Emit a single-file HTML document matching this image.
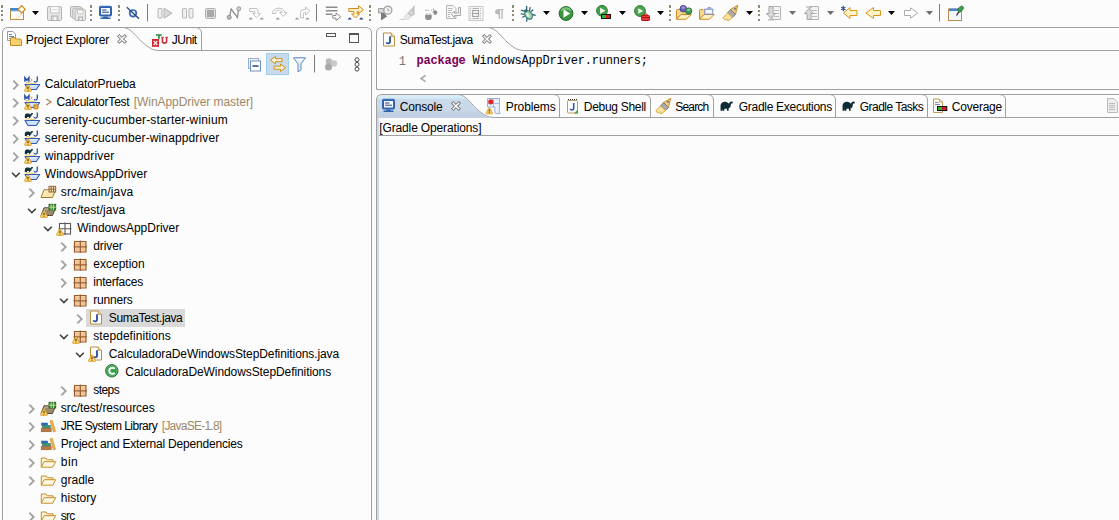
<!DOCTYPE html>
<html><head><meta charset="utf-8"><title>Eclipse</title>
<style>
html,body{margin:0;padding:0}
body{width:1119px;height:520px;overflow:hidden;background:#fcfcfc;position:relative;font:12px/16px "Liberation Sans", sans-serif;color:#000}
.t{position:absolute;white-space:pre;line-height:16px;font-size:12px}
.t b{font-weight:bold}
.m{font-family:"Liberation Mono", monospace}
.i{position:absolute;overflow:visible}
.h{position:absolute;top:5px;width:2px;height:16px;background:linear-gradient(to bottom,#8f8a72 0,#8f8a72 3px,transparent 3px,transparent 5px,#8f8a72 5px,#8f8a72 7px,transparent 7px,transparent 9px,#8f8a72 9px,#8f8a72 11px,transparent 11px,transparent 14px,#8f8a72 14px,#8f8a72 16px)}
.sel{position:absolute;left:86px;top:309px;width:99px;height:18px;background:#d9d9d9}
.act{position:absolute;left:266px;top:53px;width:23px;height:22px;box-sizing:border-box;background:#c9dbeb;border:1px solid #9ccff5}
.cstrip{position:absolute;left:377px;top:118px;width:2px;height:402px;background:#cddbeb}
</style></head><body>
<div class="sel"></div><div class="act"></div><div class="cstrip"></div>
<div class="h" style="left:1px"></div><div class="h" style="left:90px"></div><div class="h" style="left:118px"></div><div class="h" style="left:369px"></div><div class="h" style="left:512px"></div><div class="h" style="left:669px"></div><div class="h" style="left:758px"></div>

<svg class="i" style="left:0;top:0" width="1119" height="520" viewBox="0 0 1119 520" fill="none" stroke="#a0a0a0" stroke-width="1">
 <defs><linearGradient id="cg" x1="0" y1="0" x2="0" y2="1"><stop offset="0" stop-color="#dbeffa"/><stop offset="0.13" stop-color="#d5e9f6"/><stop offset="0.217" stop-color="#c9d9e9"/><stop offset="0.652" stop-color="#c9d9e9"/><stop offset="0.783" stop-color="#c1d1e3"/><stop offset="1" stop-color="#c1d1e3"/></linearGradient></defs>
 <path d="M377 118 V100 Q377 95 382 95 H458.2 C463.2 95.500 467.2 99 471.600 104 C476.200 109 478.200 110.700 480.500 112.500 C484.200 115.500 488.200 118 493.200 118Z" fill="url(#cg)" stroke="none"/>
 <path d="M2.500 520 V33 Q2.500 27.500 8 27.500 H366 Q371.500 27.500 371.500 33 V520"/>
 <path d="M123.4 27.5 C128.4 28 132.4 31.5 136.8 36.5 C141.4 41.5 143.4 43.2 145.7 45 C149.4 48 153.4 50.5 158.4 50.5 H371.500"/>
 <path d="M201.5 50.5 V33.0 Q201.5 28.3 196.0 27.5"/>
 <path d="M1119 89.500 H376.500 V33 Q376.500 27.500 382 27.500 H1119"/>
 <path d="M488.3 27.5 C493.3 28 497.3 31.5 501.7 36.5 C506.3 41.5 508.3 43.2 510.6 45 C514.3 48 518.3 50.5 523.3 50.5 H1119"/>
 <path d="M376.500 520 V100 Q376.500 94.500 382 94.500 H1119"/>
 <path d="M458.2 94.5 C463.2 95 467.2 98.5 471.6 103.5 C476.2 108.5 478.2 110.2 480.5 112 C484.2 115 488.2 117.5 493.2 117.5 H1119"/>
 <path d="M379 135.500 H1119"/>
 <path d="M46.300 99 L51 102 L46.300 105" stroke="#a87848" stroke-width="1.100"/>
 <path d="M425.500 75.300 L421 78.500 L425.500 81.700" stroke="#a8a8a8" stroke-width="1.600"/>
 <path d="M559.5 117.5 V100.0 Q559.5 95.3 554.0 94.5"/><path d="M650.5 117.5 V100.0 Q650.5 95.3 645.0 94.5"/><path d="M713.5 117.5 V100.0 Q713.5 95.3 708.0 94.5"/><path d="M835.5 117.5 V100.0 Q835.5 95.3 830.0 94.5"/><path d="M927.5 117.5 V100.0 Q927.5 95.3 922.0 94.5"/><path d="M1005.5 117.5 V100.0 Q1005.5 95.3 1000.0 94.5"/>
 <path d="M147.500 4 V21.500 M316.500 4 V21.500 M939.500 4 V21.500 M314.500 55 V72.500" stroke="#7a7a7a"/>
</svg>
<svg class="i" style="left:10px;top:5px" width="16" height="16" viewBox="0 0 16 16"><rect x="0.500" y="3.500" width="13" height="11" fill="#fff" stroke="#bd8a48"/><rect x="0.500" y="3" width="13.500" height="2.800" fill="#3f86d2"/><path d="M1 6.300 H13" stroke="#a8cdf0" stroke-width="0.800"/><path d="M3 14 C8 13.500 11 10.500 12 7" stroke="#f6e3a4" stroke-width="1.200" fill="none"/><path d="M11.700 0.800 L15.200 4.400 L11.700 8 L8.200 4.400Z" fill="#fbe6b4" stroke="#cf8a20" stroke-width="1.300" stroke-linejoin="round"/><path d="M11.700 2.300 V6.500 M9.600 4.400 H13.800" stroke="#fff" stroke-width="1.600"/></svg><svg class="i" style="left:47px;top:5px" width="16" height="16" viewBox="0 0 16 16"><path d="M2 1.500 H13 Q14.500 1.500 14.500 3 V14 Q14.500 15.500 13 15.500 H2 Q0.500 15.500 0.500 14 V3 Q0.500 1.500 2 1.500Z" fill="#e6e6e6" stroke="#b4b4b4"/><rect x="3.500" y="1.500" width="8.500" height="6.500" fill="#f8f8f8" stroke="#c6c6c6"/><path d="M5 4.500 H10.500" stroke="#dcdcdc"/><rect x="4.500" y="11" width="6.500" height="4.500" fill="#d6d6d6" stroke="#b4b4b4"/><rect x="7" y="12" width="2" height="3" fill="#f6f6f6"/></svg><svg class="i" style="left:70px;top:5px" width="16" height="16" viewBox="0 0 16 16"><path d="M1.7 1.5 H9.8 Q11.0 1.5 11.0 2.7 V11.0 Q11.0 12.2 9.8 12.2 H1.7 Q0.5 12.2 0.5 11.0 V2.7 Q0.5 1.5 1.7 1.5Z" fill="#e8e8e8" stroke="#b4b4b4"/><path d="M3.9000000000000004 3.2 H12.0 Q13.2 3.2 13.2 4.4 V12.7 Q13.2 13.899999999999999 12.0 13.899999999999999 H3.9000000000000004 Q2.7 13.899999999999999 2.7 12.7 V4.4 Q2.7 3.2 3.9000000000000004 3.2Z" fill="#e8e8e8" stroke="#b4b4b4"/><path d="M6.2 4.8 H14.3 Q15.5 4.8 15.5 6.0 V14.3 Q15.5 15.5 14.3 15.5 H6.2 Q5 15.5 5 14.3 V6.0 Q5 4.8 6.2 4.8Z" fill="#e8e8e8" stroke="#b4b4b4"/><rect x="7.500" y="5" width="5.500" height="3.800" fill="#f8f8f8" stroke="#c8c8c8"/><rect x="8.500" y="12" width="4" height="3.500" fill="#d6d6d6" stroke="#b4b4b4"/><rect x="10" y="13" width="1.500" height="2" fill="#f6f6f6"/></svg><svg class="i" style="left:98px;top:4px" width="16" height="16" viewBox="0 0 16 16"><rect x="2" y="3" width="11" height="8.500" rx="0.800" fill="#f6fafe" stroke="#2f62ac" stroke-width="2"/><path d="M1.500 3 Q1.500 2.200 2.500 2.200 H12.500 Q13.500 2.200 13.500 3" fill="none" stroke="#4178c4" stroke-width="0.800"/><path d="M4 6 H8.500 M4 8.200 H11" stroke="#2b3f8a" stroke-width="1"/><path d="M5.500 12.500 H9.500 L10 13.500 H12.500 V15 H2.500 V13.500 H5Z" fill="#2f62ac"/></svg><svg class="i" style="left:126px;top:5px" width="16" height="16" viewBox="0 0 16 16"><circle cx="7" cy="8.300" r="3.300" fill="#f2f7fd" stroke="#2f66b4" stroke-width="1.700"/><path d="M0.800 2.300 L13 13.800" stroke="#27478a" stroke-width="1.300"/></svg><svg class="i" style="left:157px;top:5px" width="16" height="16" viewBox="0 0 16 16"><rect x="1" y="3.500" width="4" height="9.500" rx="0.800" fill="#f0f0f0" stroke="#b4b4b4"/><path d="M7 3.200 L15 8.200 L7 13.200Z" fill="#d8d8d8" stroke="#b4b4b4" stroke-linejoin="round"/></svg><svg class="i" style="left:180px;top:5px" width="16" height="16" viewBox="0 0 16 16"><rect x="2.500" y="3.500" width="4" height="9.500" rx="0.800" fill="#f0f0f0" stroke="#b4b4b4"/><rect x="9" y="3.500" width="4" height="9.500" rx="0.800" fill="#f0f0f0" stroke="#b4b4b4"/></svg><svg class="i" style="left:203px;top:5px" width="16" height="16" viewBox="0 0 16 16"><rect x="2.500" y="3.500" width="10" height="10" rx="1.200" fill="#e0e0e0" stroke="#b0b0b0"/><rect x="4" y="5" width="7" height="7" fill="#a8a8a8"/></svg><svg class="i" style="left:226px;top:5px" width="16" height="16" viewBox="0 0 16 16"><path d="M3.500 12 L5.200 4 L11.500 12.500 L12.500 4" stroke="#8f8f8f" stroke-width="1.300" fill="none"/><circle cx="3.200" cy="12.300" r="2" fill="#bdbdbd" stroke="#909090"/><circle cx="12.800" cy="3.800" r="2" fill="#cfcfcf" stroke="#9a9a9a"/></svg><svg class="i" style="left:249px;top:5px" width="16" height="16" viewBox="0 0 16 16"><path d="M0.500 3.500 H7 Q9 3.500 9 5.500 V8.500 H11.500 L7.500 12.500 L3.500 8.500 H6 V6.500 H0.500Z" fill="#fafafa" stroke="#c2c2c2"/><path d="M-0.3 14.500 Q1.7 10.700 3.7 14.500Z" fill="#9c9c9c"/><path d="M10.8 14.500 Q12.8 10.700 14.8 14.500Z" fill="#9c9c9c"/></svg><svg class="i" style="left:272px;top:5px" width="16" height="16" viewBox="0 0 16 16"><path d="M0.500 8.500 C0.500 1.500 12.500 1.500 12.500 7.500 H15 L11.300 11.500 L7.500 7.500 H10 C10 4.500 3.500 4 3.500 8.500Z" fill="#fafafa" stroke="#c2c2c2"/><path d="M3.8 14.500 Q5.8 10.700 7.8 14.500Z" fill="#9c9c9c"/></svg><svg class="i" style="left:295px;top:5px" width="16" height="16" viewBox="0 0 16 16"><path d="M5.500 13 V7.500 Q5.500 4.500 8.500 4.500 H10.500 V2 L14.800 6 L10.500 10 V7.500 H9.500 Q8.500 7.500 8.500 8.500 V13Z" fill="#fafafa" stroke="#c2c2c2"/><path d="M0 14.500 Q2 10.700 4 14.500Z" fill="#9c9c9c"/><path d="M10.5 14.500 Q12.5 10.700 14.5 14.500Z" fill="#9c9c9c"/></svg><svg class="i" style="left:325px;top:5px" width="16" height="16" viewBox="0 0 16 16"><path d="M0.800 2.200 H12.500 M0.800 5.700 H12.500 M0.800 9.200 H7.500" stroke="#8c8c8c" stroke-width="1.400"/><path d="M7.800 10.500 H11 V8 L15.700 11.800 L11 15.500 V13.200 H7.800Z" fill="#fff" stroke="#8a8a8a"/></svg><svg class="i" style="left:348px;top:5px" width="16" height="16" viewBox="0 0 16 16"><path d="M0.800 3.500 H10.500 V0.800 L15.500 4.800 L10.500 8.800 V6.500 H9.300 V9 H11.500 L7.500 13 L3.500 9 H5.800 V6.500 H0.800Z" fill="#fdf0c8" stroke="#d68a18" stroke-linejoin="round"/><path d="M-0.3 14.500 Q1.7 10.700 3.7 14.500Z" fill="#2c4a8c"/><path d="M11.3 14.500 Q13.3 10.700 15.3 14.500Z" fill="#2c4a8c"/></svg><svg class="i" style="left:377px;top:5px" width="16" height="16" viewBox="0 0 16 16"><path d="M1.500 3.500 H8 V8 H1.500Z" fill="#d4d4d4" stroke="#9e9e9e"/><path d="M4 8 H7.500 L10 11.500 L4 15.500Z" fill="#7a7a7a"/><circle cx="10.800" cy="5.200" r="4" fill="#f2f2f2" stroke="#ababab" stroke-width="1.500"/><path d="M10.800 3.200 V5.600 H12.800" stroke="#ababab" fill="none"/></svg><svg class="i" style="left:400px;top:5px" width="16" height="16" viewBox="0 0 16 16"><path d="M14.700 0 L14.700 9.500 L11 11.800 L7.300 8Z" fill="#c6c6c6"/><path d="M7.300 8 L11 11.800 L8.500 14.500 H3 L4.200 11.800Z" fill="#e8e8e8" stroke="#d6d6d6" stroke-width="0.700"/><path d="M10 6.500 L12.500 9" stroke="#e4e4e4" stroke-width="1.200"/><path d="M-0.500 14.500 H3.500" stroke="#cdcdcd"/></svg><svg class="i" style="left:423px;top:5px" width="16" height="16" viewBox="0 0 16 16"><circle cx="5.400" cy="11.700" r="3.400" fill="#8e8e8e"/><ellipse cx="5.400" cy="8.900" rx="2.500" ry="1" fill="#e2e2e2"/><path d="M2 5.300 H4 M4.800 5.300 H6" stroke="#a0a0a0" stroke-width="0.900"/><circle cx="12" cy="7.600" r="2.300" fill="#8c8c8c"/><path d="M9.300 8.300 L11.200 7.500 L10.300 9.800Z" fill="#fcfcfc"/><circle cx="8.600" cy="5" r="0.600" fill="#9a9a9a"/><circle cx="10.500" cy="4.200" r="0.600" fill="#9a9a9a"/></svg><svg class="i" style="left:446px;top:5px" width="16" height="16" viewBox="0 0 16 16"><path d="M0.500 0.500 H7 L10 3.500 V13.500 H0.500Z" fill="#f6f6f6" stroke="#b4b4b4"/><path d="M2 3.500 H6.500 M2 5.500 H6 M2 7.500 H5 M2 9.500 H4 M2 11.500 H4" stroke="#b8b8b8"/><path d="M12.500 2.500 H14.500 V10.500 H8.500 V12.500 L5.300 9.300 L8.500 6 V8 H12.500Z" fill="#f2f2f2" stroke="#a8a8a8"/></svg><svg class="i" style="left:469px;top:5px" width="16" height="16" viewBox="0 0 16 16"><rect x="0" y="1.500" width="14" height="14" fill="#f6f6f6" stroke="#c8c8c8"/><path d="M3.500 3.500 H10 M3.500 13.500 H10" stroke="#b4b4b4"/><rect x="3.500" y="5.500" width="6" height="6" fill="#f0f0f0" stroke="#a4a4a4"/><path d="M3.500 8.500 H9.500" stroke="#a4a4a4"/><path d="M1.500 3 V14 M11.500 3 V14" stroke="#b8b8b8" stroke-dasharray="1 1.500"/></svg><svg class="i" style="left:492px;top:5px" width="16" height="16" viewBox="0 0 16 16"><path d="M6.800 4 H11.500 V5.300 H10.700 V14 H9.300 V5.300 H8 V14 H6.600 V9.500 C1.800 9.500 1.800 4 6.800 4Z" fill="#b9b9b9"/></svg><svg class="i" style="left:520px;top:5px" width="16" height="16" viewBox="0 0 16 16"><g transform="translate(0.300,1) rotate(-35 8 8.500)"><path d="M4.500 0.500 L6.800 4 M11.500 0.500 L9.200 4 M1.500 7.500 H4.500 M11.500 7.500 H14.800 M2.500 13.500 L5 10.500 M13.500 13.500 L11 10.500 M2.200 3.500 L5 6.300 M13.800 3.500 L11 6.300" stroke="#1d5a6b" stroke-width="1.200"/><ellipse cx="8" cy="9" rx="3.300" ry="4.700" fill="#9ed0a4" stroke="#2a6a7a"/><ellipse cx="7.300" cy="8.500" rx="1.300" ry="2.600" fill="#e2f4dc"/><circle cx="8" cy="4" r="1.600" fill="#2b6a78"/></g></svg><svg class="i" style="left:558px;top:5px" width="16" height="16" viewBox="0 0 16 16"><circle cx="8" cy="8.500" r="6.900" fill="#3b9640" stroke="#1f6b27"/><path d="M2.300 6.500 A6 6 0 0 1 13.700 6.500 A9 9 0 0 0 2.300 6.500Z" fill="#8fd08f" opacity="0.800"/><path d="M5.500 4.300 L12.200 8.500 L5.500 12.700Z" fill="#fff"/></svg><svg class="i" style="left:596px;top:5px" width="16" height="16" viewBox="0 0 16 16"><circle cx="6" cy="5.800" r="5.400" fill="#44a048" stroke="#2a7a31"/><path d="M4.200 2.800 L9.200 5.800 L4.200 8.800Z" fill="#fff"/><rect x="5" y="9" width="10" height="5" fill="#111"/><rect x="6" y="10" width="4" height="3" fill="#2db52d"/><rect x="10" y="10" width="4" height="3" fill="#e01b1b"/></svg><svg class="i" style="left:634px;top:5px" width="16" height="16" viewBox="0 0 16 16"><circle cx="6" cy="6" r="5.400" fill="#4aa54c" stroke="#2a7a31"/><path d="M4.300 3.200 L9 6 L4.300 8.800Z" fill="#fff"/><rect x="7.500" y="10.500" width="8" height="5" rx="0.800" fill="#e23b3b" stroke="#b01818"/><path d="M10 10.500 V9 H13 V10.500 M7.500 12.500 H15.500" stroke="#b01818" fill="none"/></svg><svg class="i" style="left:676px;top:5px" width="16" height="16" viewBox="0 0 16 16"><path d="M0.500 14 V5.500 Q0.500 4.500 1.500 4.500 H4 L5 5.500 H10 V9.500 H5Z" fill="#f6d88a" stroke="#cf8a28" stroke-linejoin="round"/><path d="M0.500 14.300 L5 9.500 H15.300 L10 14.300Z" fill="#fdf0c0" stroke="#cf8a28" stroke-linejoin="round"/><circle cx="7.300" cy="3.800" r="3.300" fill="#6a64b6" stroke="#4a4596"/><ellipse cx="7.300" cy="2.600" rx="2" ry="1.200" fill="#a9a4dc" opacity="0.800"/><circle cx="12.700" cy="6" r="3.100" fill="#3e9d56" stroke="#28753b"/><ellipse cx="12.700" cy="4.800" rx="1.900" ry="1.100" fill="#9fd8ac" opacity="0.800"/></svg><svg class="i" style="left:699px;top:5px" width="16" height="16" viewBox="0 0 16 16"><path d="M0.500 14 V5.500 Q0.500 4.500 1.500 4.500 H4 L5 5.500 H10 V9.500 H5Z" fill="#f6d88a" stroke="#cf8a28" stroke-linejoin="round"/><path d="M0.500 14.300 L5 9.500 H15.300 L10 14.300Z" fill="#fdf0c0" stroke="#cf8a28" stroke-linejoin="round"/><rect x="5.800" y="4.200" width="8" height="5" fill="#f2f5fd" stroke="#7d8cc4"/><path d="M8.800 4 V2.700 H11.800 V4" fill="#b4bde0" stroke="#7d8cc4" stroke-width="0.900"/></svg><svg class="i" style="left:722px;top:5px" width="16" height="16" viewBox="0 0 16 16"><path d="M8.500 4.500 L15.700 0.300 L13.500 9.500Z" fill="#f2c878" stroke="#c8902a" stroke-linejoin="round"/><circle cx="13" cy="3.800" r="0.900" fill="#3a5ab0"/><path d="M5.500 8 L8.500 4.500 L13.500 9.500 L10.500 12.500Z" fill="#ababab" stroke="#7c7c7c" stroke-linejoin="round"/><path d="M5.500 8 L10.500 12.500 L6 16 L4.700 13.800 L3 15.300 L0.800 12.800Z" fill="#fbe3a0" stroke="#d8a840" stroke-linejoin="round"/></svg><svg class="i" style="left:766px;top:5px" width="16" height="16" viewBox="0 0 16 16"><path d="M6 1.500 H14.500 V14.500 H6Z" fill="#f3f3f3" stroke="#b4b4b4"/><path d="M8 5.500 H13 M8 8.500 H13 M8 11.500 H13" stroke="#bcbcbc"/><path d="M3 1.500 H7 V8.500 H9.500 L5 13.500 L0.500 8.500 H3Z" fill="#d9d9d9" stroke="#a4a4a4"/><path d="M2 14.800 H8" stroke="#a4a4a4"/></svg><svg class="i" style="left:804px;top:5px" width="16" height="16" viewBox="0 0 16 16"><path d="M6 1.500 H14.500 V14.500 H6Z" fill="#f3f3f3" stroke="#b4b4b4"/><path d="M8 5.500 H13 M8 8.500 H13 M8 11.500 H13" stroke="#bcbcbc"/><path d="M3 14.500 H7 V8.500 H9.500 L5 3.500 L0.500 8.500 H3Z" fill="#d9d9d9" stroke="#a4a4a4"/><path d="M2 2 H8" stroke="#a4a4a4"/></svg><svg class="i" style="left:841px;top:5px" width="16" height="16" viewBox="0 0 16 16"><path d="M16 5.500 H9 V2.500 L2.500 8 L9 13.500 V10.500 H16Z" fill="#fff4c8" stroke="#d7951f" stroke-linejoin="round"/><path d="M2.300 0.800 V6.200 M0.200 2.200 L4.400 4.800 M4.400 2.200 L0.200 4.800" stroke="#2a4a9a" stroke-width="1.100"/></svg><svg class="i" style="left:865px;top:5px" width="16" height="16" viewBox="0 0 16 16"><path d="M15.500 5.500 H8.500 V2.500 L0.800 8 L8.500 13.500 V10.500 H15.500Z" fill="#fff4c8" stroke="#d7951f"/></svg><svg class="i" style="left:903px;top:5px" width="16" height="16" viewBox="0 0 16 16"><path d="M1.500 5.500 H7.500 V2.800 L14.700 8 L7.500 13.200 V10.500 H1.500Z" fill="#fff" stroke="#ababab"/></svg><svg class="i" style="left:948px;top:5px" width="16" height="16" viewBox="0 0 16 16"><rect x="0.500" y="4" width="13" height="11.500" fill="#e3effa" stroke="#b88c50"/><path d="M1 9 L7 4.500 H13 V15 H1Z" fill="#f4f9fe" opacity="0.800"/><rect x="1" y="3.500" width="12" height="2.500" fill="#4b86d0"/><path d="M8.500 10.500 L11 6.500" stroke="#222" stroke-width="1.200"/><path d="M9.800 5.300 Q10.500 2 12.800 1.500 Q14 0.200 15 1.700 Q16 3 14.800 4.500 Q13 7.200 11.300 7.300Z" fill="#3aa04a" stroke="#1f6b2c" stroke-width="0.800"/></svg><svg class="i" style="left:32px;top:11px" width="7" height="4" viewBox="0 0 7 4"><path d="M0 0 H7 L3.5 4Z" fill="#000"/></svg><svg class="i" style="left:543px;top:11px" width="7" height="4" viewBox="0 0 7 4"><path d="M0 0 H7 L3.5 4Z" fill="#000"/></svg><svg class="i" style="left:581px;top:11px" width="7" height="4" viewBox="0 0 7 4"><path d="M0 0 H7 L3.5 4Z" fill="#000"/></svg><svg class="i" style="left:619px;top:11px" width="7" height="4" viewBox="0 0 7 4"><path d="M0 0 H7 L3.5 4Z" fill="#000"/></svg><svg class="i" style="left:657px;top:11px" width="7" height="4" viewBox="0 0 7 4"><path d="M0 0 H7 L3.5 4Z" fill="#000"/></svg><svg class="i" style="left:746px;top:11px" width="7" height="4" viewBox="0 0 7 4"><path d="M0 0 H7 L3.5 4Z" fill="#000"/></svg><svg class="i" style="left:888px;top:11px" width="7" height="4" viewBox="0 0 7 4"><path d="M0 0 H7 L3.5 4Z" fill="#000"/></svg><svg class="i" style="left:789px;top:11px" width="7" height="4" viewBox="0 0 7 4"><path d="M0 0 H7 L3.5 4Z" fill="#6e6e6e"/></svg><svg class="i" style="left:827px;top:11px" width="7" height="4" viewBox="0 0 7 4"><path d="M0 0 H7 L3.5 4Z" fill="#6e6e6e"/></svg><svg class="i" style="left:926px;top:11px" width="7" height="4" viewBox="0 0 7 4"><path d="M0 0 H7 L3.5 4Z" fill="#6e6e6e"/></svg><svg class="i" style="left:6px;top:31px" width="16" height="16" viewBox="0 0 16 16"><path d="M1.500 0.500 H7 L9.500 3 V9.500 H1.500Z" fill="#fff" stroke="#8f9bb5"/><path d="M3 3.500 H6 M3 5.500 H8 M3 7.500 H6" stroke="#5b8bd0"/><path d="M4.500 14.500 V8 Q4.500 6.500 6 6.500 H8.500 L9.500 8 H14 Q15.500 8 15.500 9.500 V14.500Z" fill="#f6cf6e" stroke="#c18d2a"/></svg><svg class="i" style="left:117px;top:34px" width="10" height="10" viewBox="0 0 10 10"><path d="M0.600 2.200 L2.200 0.600 L5 3.400 L7.800 0.600 L9.400 2.200 L6.600 5 L9.400 7.800 L7.800 9.400 L5 6.600 L2.200 9.400 L0.600 7.800 L3.400 5Z" fill="#fcfcfc" stroke="#5a5a5a" stroke-width="1" stroke-linejoin="round"/></svg><svg class="i" style="left:152px;top:33px" width="16" height="16" viewBox="0 0 16 16"><rect x="0" y="6" width="7" height="7.800" fill="#d8252c"/><path d="M1.700 7.800 L5.300 12 M5.300 7.800 L1.700 12" stroke="#fff" stroke-width="1.200"/><path d="M4 2 H9.800" stroke="#2a8a3a" stroke-width="1.500"/><path d="M6.900 2 V5.800" stroke="#2a8a3a" stroke-width="1.700"/><path d="M10.400 4.300 V8.300 Q10.400 10.100 12.500 10.100 Q14.600 10.100 14.600 8.300 V4.300" stroke="#c8323a" stroke-width="1.600" fill="none"/><path d="M9 4.300 H11.800 M13.300 4.300 H16" stroke="#c8323a" stroke-width="0.900"/></svg><svg class="i" style="left:326px;top:33px" width="11" height="5" viewBox="0 0 11 5"><rect x="0.500" y="0.500" width="9" height="3" fill="#fcfcfc" stroke="#555"/></svg><svg class="i" style="left:349px;top:33px" width="11" height="10" viewBox="0 0 11 10"><rect x="0.500" y="0.500" width="9" height="9" fill="#fcfcfc" stroke="#555"/><path d="M0.500 1.500 H9.500" stroke="#555"/></svg><svg class="i" style="left:247px;top:57px" width="16" height="16" viewBox="0 0 16 16"><rect x="1.500" y="1.500" width="10" height="10" fill="#eef2fa" stroke="#9aaed0"/><rect x="3.500" y="4" width="10" height="10" fill="#fff" stroke="#6f8fc4"/><path d="M5.500 9 H11.500" stroke="#1f3f8a" stroke-width="1.500"/></svg><svg class="i" style="left:270px;top:56px" width="16" height="16" viewBox="0 0 16 16"><path d="M12 2.700 H5.500 V0.500 L0.500 4.200 L5.500 7.900 V5.700 H12Z" fill="#fff6d8" stroke="#cf8d1e" stroke-linejoin="round"/><path d="M4 10.200 H10.500 V8 L15.500 11.700 L10.500 15.400 V13.200 H4Z" fill="#fff6d8" stroke="#cf8d1e" stroke-linejoin="round"/></svg><svg class="i" style="left:292px;top:57px" width="16" height="16" viewBox="0 0 16 16"><path d="M1.500 0.800 H13.500 L9 6.800 V13 L6 14.800 V6.800Z" fill="#e4effa" stroke="#5f86c2" stroke-linejoin="round"/><path d="M3.500 2 H11.500 L10.500 3.300 H4.500Z" fill="#fff"/></svg><svg class="i" style="left:323px;top:57px" width="16" height="16" viewBox="0 0 16 16"><circle cx="6" cy="4.500" r="3.200" fill="#b9b9b9"/><circle cx="11" cy="6.500" r="3.200" fill="#c9c9c9"/><circle cx="5.500" cy="10" r="3.500" fill="#a9a9a9"/></svg><svg class="i" style="left:354.4px;top:57.2px" width="6" height="16" viewBox="0 0 6 16"><circle cx="3" cy="2.700" r="2" fill="#fff" stroke="#4a4a4a"/><circle cx="3" cy="7.400" r="2" fill="#fff" stroke="#4a4a4a"/><circle cx="3" cy="12.100" r="2" fill="#fff" stroke="#4a4a4a"/></svg><svg class="i" style="left:380.5px;top:31px" width="16" height="16" viewBox="0 0 16 16"><path d="M2.500 2 H10.200 L13.500 5.300 V15 H2.500Z" fill="#fff" stroke="#b8903c"/><path d="M10.200 2 V5.300 H13.500" fill="#f1dfb0" stroke="#b8903c" stroke-width="0.900"/><path d="M9 5.300 V10.500 Q9 12.400 7.200 12.400 Q5.700 12.400 5.300 11.200" stroke="#2b4c9c" stroke-width="1.800" fill="none"/></svg><svg class="i" style="left:482px;top:34px" width="10" height="10" viewBox="0 0 10 10"><path d="M0.600 2.200 L2.200 0.600 L5 3.400 L7.800 0.600 L9.400 2.200 L6.600 5 L9.400 7.800 L7.800 9.400 L5 6.600 L2.200 9.400 L0.600 7.800 L3.400 5Z" fill="#fcfcfc" stroke="#5a5a5a" stroke-width="1" stroke-linejoin="round"/></svg><svg class="i" style="left:381px;top:97px" width="16" height="16" viewBox="0 0 16 16"><rect x="2" y="3" width="11" height="8.500" rx="0.800" fill="#f6fafe" stroke="#2f62ac" stroke-width="2"/><path d="M1.500 3 Q1.500 2.200 2.500 2.200 H12.500 Q13.500 2.200 13.500 3" fill="none" stroke="#4178c4" stroke-width="0.800"/><path d="M4 6 H8.500 M4 8.200 H11" stroke="#2b3f8a" stroke-width="1"/><path d="M5.500 12.500 H9.500 L10 13.500 H12.500 V15 H2.500 V13.500 H5Z" fill="#2f62ac"/></svg><svg class="i" style="left:451px;top:101px" width="10" height="10" viewBox="0 0 10 10"><path d="M0.600 2.200 L2.200 0.600 L5 3.400 L7.800 0.600 L9.400 2.200 L6.600 5 L9.400 7.800 L7.800 9.400 L5 6.600 L2.200 9.400 L0.600 7.800 L3.400 5Z" fill="#fcfcfc" stroke="#5a5a5a" stroke-width="1" stroke-linejoin="round"/></svg><svg class="i" style="left:485px;top:98px" width="16" height="16" viewBox="0 0 16 16"><path d="M2.500 0.500 H14.500 V8 Q13.500 12 15 15.500 H10.500 Q9 12 10 9 H2.500Z" fill="#e8f0fa" stroke="#9ab0d4"/><path d="M8.500 0.500 V9 M2.500 5.500 H14.500" stroke="#9ab0d4" stroke-width="0.800"/><circle cx="5.800" cy="3.800" r="2.600" fill="#e0252c"/><g transform="translate(0.500,0.300) scale(0.950)"><g transform="translate(-0.200,1.400)"><path d="M3.700 8.600 Q4.200 8 4.700 8.600 L7.600 14 Q7.900 15 7 15 H1.400 Q0.500 15 0.800 14Z" fill="#fbd06a" stroke="#d89a28" stroke-width="0.800"/><path d="M4.200 10.300 V12.600 M4.200 13.300 V14.200" stroke="#4a3200" stroke-width="1.100"/></g></g></svg><svg class="i" style="left:564px;top:98px" width="16" height="16" viewBox="0 0 16 16"><rect x="3.500" y="2.500" width="10" height="12.500" rx="1" fill="#fff" stroke="#c09a58"/><path d="M4 1.500 H13.500" stroke="#333" stroke-dasharray="1 1"/><path d="M9.700 5 V10 Q9.700 12 7.900 12 Q6.500 12 6.200 10.800" stroke="#3557a8" stroke-width="1.600" fill="none"/><path d="M14 11.500 V15.500 H10Z" fill="#3aa04a"/></svg><svg class="i" style="left:655px;top:98px" width="16" height="16" viewBox="0 0 16 16"><path d="M8.500 4.500 L15.700 0.300 L13.500 9.500Z" fill="#f2c878" stroke="#c8902a" stroke-linejoin="round"/><circle cx="13" cy="3.800" r="0.900" fill="#3a5ab0"/><path d="M5.500 8 L8.500 4.500 L13.500 9.500 L10.500 12.500Z" fill="#ababab" stroke="#7c7c7c" stroke-linejoin="round"/><path d="M5.500 8 L10.500 12.500 L6 16 L4.700 13.800 L3 15.300 L0.800 12.800Z" fill="#fbe3a0" stroke="#d8a840" stroke-linejoin="round"/></svg><svg class="i" style="left:718px;top:98px" width="16" height="16" viewBox="0 0 16 16"><g transform="translate(1.700,0.300) scale(0.850,1)"><path d="M1 12.500 V8 C1 4.500 4 3.500 6.500 3.500 C8.500 3.500 10 4.500 10.800 5.500 C11.500 3.500 13.500 2.500 15 3.500 C15.800 4.200 15.300 5.500 14.300 5.300 C13.500 5.200 13 5.800 13 7 C13 9 11.500 10 10.500 10 V12.500 H8.500 V10.500 H5.500 V12.500 H3.500 V10.500 L3 12.500Z" fill="#0d2b36"/></g></svg><svg class="i" style="left:840px;top:98px" width="16" height="16" viewBox="0 0 16 16"><g transform="translate(1.700,0.300) scale(0.850,1)"><path d="M1 12.500 V8 C1 4.500 4 3.500 6.500 3.500 C8.500 3.500 10 4.500 10.800 5.500 C11.500 3.500 13.500 2.500 15 3.500 C15.800 4.200 15.300 5.500 14.300 5.300 C13.500 5.200 13 5.800 13 7 C13 9 11.500 10 10.500 10 V12.500 H8.500 V10.500 H5.500 V12.500 H3.500 V10.500 L3 12.500Z" fill="#0d2b36"/></g></svg><svg class="i" style="left:932px;top:98px" width="16" height="16" viewBox="0 0 16 16"><path d="M1.500 1 H7.500 L10.500 4 V14.500 H1.500Z" fill="#fdfbf4" stroke="#c09a58"/><path d="M7.500 1 V4 H10.500" fill="#eadcb8" stroke="#c09a58" stroke-width="0.800"/><path d="M3 4.500 H6.500 M3 6.500 H8" stroke="#7a8fc0"/><rect x="5" y="8" width="10.300" height="5" fill="#111"/><rect x="6" y="9" width="4.200" height="3" fill="#2db52d"/><rect x="10.200" y="9" width="4.100" height="3" fill="#e01b1b"/></svg><svg class="i" style="left:1106px;top:97px" width="16" height="16" viewBox="0 0 16 16"><path d="M1.500 1.500 H8 L11.500 5 V15.500 H1.500Z" fill="#eee" stroke="#bbb"/><path d="M3 6.500 H9 M3 8.500 H9 M3 10.500 H9 M3 12.500 H9" stroke="#bbb"/></svg><svg class="i" style="left:24px;top:75px" width="16" height="16" viewBox="0 0 16 16"><g transform="translate(0,1)"><path d="M2 8.500 V6.500 H5.500 L6.500 7.500 H11 V8.500" fill="#fbeeb0" stroke="#e2c76a" stroke-width="0.800"/><path d="M1 8.500 H15.700 L12.300 13.500 H4Z" fill="#c3def6" stroke="#3a58b8" stroke-width="1.100" stroke-linejoin="round"/><path d="M3.800 9.600 H13 L12.300 10.600 H4.500Z" fill="#e6f3fd"/></g><g transform="translate(0,1)"><path d="M0.900 5.800 V1.700 L2.900 4.200 L4.900 1.700 V5.800" stroke="#2a50a8" stroke-width="1.500" fill="none"/><path d="M6.500 2.500 L8.300 4 L6.500 5.500" stroke="#d9a22a" stroke-width="1" fill="none"/><path d="M13.300 0.500 V4.300 Q13.300 6.100 11.600 6.100 Q10.400 6.100 10.200 5" stroke="#2a50a8" stroke-width="1.300" fill="none"/></g><g transform="translate(-0.200,1.400)"><path d="M3.700 8.600 Q4.200 8 4.700 8.600 L7.600 14 Q7.900 15 7 15 H1.400 Q0.500 15 0.800 14Z" fill="#fbd06a" stroke="#d89a28" stroke-width="0.800"/><path d="M4.200 10.300 V12.600 M4.200 13.300 V14.200" stroke="#4a3200" stroke-width="1.100"/></g></svg><svg class="i" style="left:11px;top:75px" width="16" height="16" viewBox="0 0 16 16"><path d="M2.300 5.700 L6.700 10 L2.300 14.300" fill="none" stroke="#a0a0a0" stroke-width="1.800"/></svg><svg class="i" style="left:24px;top:93px" width="16" height="16" viewBox="0 0 16 16"><g transform="translate(0,1)"><path d="M2 8.500 V6.500 H5.500 L6.500 7.500 H11 V8.500" fill="#fbeeb0" stroke="#e2c76a" stroke-width="0.800"/><path d="M1 8.500 H15.700 L12.300 13.500 H4Z" fill="#c3def6" stroke="#3a58b8" stroke-width="1.100" stroke-linejoin="round"/><path d="M3.800 9.600 H13 L12.300 10.600 H4.500Z" fill="#e6f3fd"/></g><g transform="translate(0,1)"><path d="M0.900 5.800 V1.700 L2.900 4.200 L4.900 1.700 V5.800" stroke="#2a50a8" stroke-width="1.500" fill="none"/><path d="M6.500 2.500 L8.300 4 L6.500 5.500" stroke="#d9a22a" stroke-width="1" fill="none"/><path d="M13.300 0.500 V4.300 Q13.300 6.100 11.600 6.100 Q10.400 6.100 10.200 5" stroke="#2a50a8" stroke-width="1.300" fill="none"/></g><g transform="translate(-0.200,1.400)"><path d="M3.700 8.600 Q4.200 8 4.700 8.600 L7.600 14 Q7.900 15 7 15 H1.400 Q0.500 15 0.800 14Z" fill="#fbd06a" stroke="#d89a28" stroke-width="0.800"/><path d="M4.200 10.300 V12.600 M4.200 13.300 V14.200" stroke="#4a3200" stroke-width="1.100"/></g><path d="M10 12 V15.600 Q12 16.600 14 15.600 V12" fill="#f6b23a" stroke="#b8720e" stroke-width="0.900"/><ellipse cx="12" cy="12" rx="2" ry="0.900" fill="#fde4a8" stroke="#b8720e" stroke-width="0.800"/></svg><svg class="i" style="left:11px;top:93px" width="16" height="16" viewBox="0 0 16 16"><path d="M2.300 5.700 L6.700 10 L2.300 14.300" fill="none" stroke="#a0a0a0" stroke-width="1.800"/></svg><svg class="i" style="left:24px;top:111px" width="16" height="16" viewBox="0 0 16 16"><g transform="translate(0,1)"><path d="M2 8.500 V6.500 H5.500 L6.500 7.500 H11 V8.500" fill="#fbeeb0" stroke="#e2c76a" stroke-width="0.800"/><path d="M1 8.500 H15.700 L12.300 13.500 H4Z" fill="#c3def6" stroke="#3a58b8" stroke-width="1.100" stroke-linejoin="round"/><path d="M3.800 9.600 H13 L12.300 10.600 H4.500Z" fill="#e6f3fd"/></g><g transform="translate(0,1)"><path d="M0.800 6 V3.800 C0.800 1.600 2.800 1.400 4 1.400 C5 1.400 5.900 1.900 6.300 2.500 C6.700 1.300 7.900 0.700 8.800 1.300 C9.300 1.700 9 2.500 8.400 2.400 C7.900 2.300 7.600 2.700 7.600 3.300 C7.600 4.500 6.800 5 6.200 5 V6 H5.100 V5.100 H3.100 V6Z" fill="#10303c"/><path d="M9 4 L10 5.500" stroke="#e0b040" stroke-width="0.800"/><path d="M13.300 0.500 V4.300 Q13.300 6.100 11.600 6.100 Q10.400 6.100 10.200 5" stroke="#2a50a8" stroke-width="1.300" fill="none"/></g></svg><svg class="i" style="left:11px;top:111px" width="16" height="16" viewBox="0 0 16 16"><path d="M2.300 5.700 L6.700 10 L2.300 14.300" fill="none" stroke="#a0a0a0" stroke-width="1.800"/></svg><svg class="i" style="left:24px;top:129px" width="16" height="16" viewBox="0 0 16 16"><g transform="translate(0,1)"><path d="M2 8.500 V6.500 H5.500 L6.500 7.500 H11 V8.500" fill="#fbeeb0" stroke="#e2c76a" stroke-width="0.800"/><path d="M1 8.500 H15.700 L12.300 13.500 H4Z" fill="#c3def6" stroke="#3a58b8" stroke-width="1.100" stroke-linejoin="round"/><path d="M3.800 9.600 H13 L12.300 10.600 H4.500Z" fill="#e6f3fd"/></g><g transform="translate(0,1)"><path d="M0.800 6 V3.800 C0.800 1.600 2.800 1.400 4 1.400 C5 1.400 5.900 1.900 6.300 2.500 C6.700 1.300 7.900 0.700 8.800 1.300 C9.300 1.700 9 2.500 8.400 2.400 C7.900 2.300 7.600 2.700 7.600 3.300 C7.600 4.500 6.800 5 6.200 5 V6 H5.100 V5.100 H3.100 V6Z" fill="#10303c"/><path d="M9 4 L10 5.500" stroke="#e0b040" stroke-width="0.800"/><path d="M13.300 0.500 V4.300 Q13.300 6.100 11.600 6.100 Q10.400 6.100 10.200 5" stroke="#2a50a8" stroke-width="1.300" fill="none"/></g><g transform="translate(-0.200,1.400)"><path d="M3.700 8.600 Q4.200 8 4.700 8.600 L7.600 14 Q7.900 15 7 15 H1.400 Q0.500 15 0.800 14Z" fill="#fbd06a" stroke="#d89a28" stroke-width="0.800"/><path d="M4.200 10.300 V12.600 M4.200 13.300 V14.200" stroke="#4a3200" stroke-width="1.100"/></g></svg><svg class="i" style="left:11px;top:129px" width="16" height="16" viewBox="0 0 16 16"><path d="M2.300 5.700 L6.700 10 L2.300 14.300" fill="none" stroke="#a0a0a0" stroke-width="1.800"/></svg><svg class="i" style="left:24px;top:147px" width="16" height="16" viewBox="0 0 16 16"><g transform="translate(0,1)"><path d="M2 8.500 V6.500 H5.500 L6.500 7.500 H11 V8.500" fill="#fbeeb0" stroke="#e2c76a" stroke-width="0.800"/><path d="M1 8.500 H15.700 L12.300 13.500 H4Z" fill="#c3def6" stroke="#3a58b8" stroke-width="1.100" stroke-linejoin="round"/><path d="M3.800 9.600 H13 L12.300 10.600 H4.500Z" fill="#e6f3fd"/></g><g transform="translate(0,1)"><path d="M0.800 6 V3.800 C0.800 1.600 2.800 1.400 4 1.400 C5 1.400 5.900 1.900 6.300 2.500 C6.700 1.300 7.900 0.700 8.800 1.300 C9.300 1.700 9 2.500 8.400 2.400 C7.900 2.300 7.600 2.700 7.600 3.300 C7.600 4.500 6.800 5 6.200 5 V6 H5.100 V5.100 H3.100 V6Z" fill="#10303c"/><path d="M9 4 L10 5.500" stroke="#e0b040" stroke-width="0.800"/><path d="M13.300 0.500 V4.300 Q13.300 6.100 11.600 6.100 Q10.400 6.100 10.200 5" stroke="#2a50a8" stroke-width="1.300" fill="none"/></g><g transform="translate(-0.200,1.400)"><path d="M3.700 8.600 Q4.200 8 4.700 8.600 L7.600 14 Q7.900 15 7 15 H1.400 Q0.500 15 0.800 14Z" fill="#fbd06a" stroke="#d89a28" stroke-width="0.800"/><path d="M4.200 10.300 V12.600 M4.200 13.300 V14.200" stroke="#4a3200" stroke-width="1.100"/></g></svg><svg class="i" style="left:11px;top:147px" width="16" height="16" viewBox="0 0 16 16"><path d="M2.300 5.700 L6.700 10 L2.300 14.300" fill="none" stroke="#a0a0a0" stroke-width="1.800"/></svg><svg class="i" style="left:24px;top:165px" width="16" height="16" viewBox="0 0 16 16"><g transform="translate(0,1)"><path d="M2 8.500 V6.500 H5.500 L6.500 7.500 H11 V8.500" fill="#fbeeb0" stroke="#e2c76a" stroke-width="0.800"/><path d="M1 8.500 H15.700 L12.300 13.500 H4Z" fill="#c3def6" stroke="#3a58b8" stroke-width="1.100" stroke-linejoin="round"/><path d="M3.800 9.600 H13 L12.300 10.600 H4.500Z" fill="#e6f3fd"/></g><g transform="translate(0,1)"><path d="M0.800 6 V3.800 C0.800 1.600 2.800 1.400 4 1.400 C5 1.400 5.900 1.900 6.300 2.500 C6.700 1.300 7.900 0.700 8.800 1.300 C9.300 1.700 9 2.500 8.400 2.400 C7.900 2.300 7.600 2.700 7.600 3.300 C7.600 4.500 6.800 5 6.200 5 V6 H5.100 V5.100 H3.100 V6Z" fill="#10303c"/><path d="M9 4 L10 5.500" stroke="#e0b040" stroke-width="0.800"/><path d="M13.300 0.500 V4.300 Q13.300 6.100 11.600 6.100 Q10.400 6.100 10.200 5" stroke="#2a50a8" stroke-width="1.300" fill="none"/></g><g transform="translate(-0.200,1.400)"><path d="M3.700 8.600 Q4.200 8 4.700 8.600 L7.600 14 Q7.900 15 7 15 H1.400 Q0.500 15 0.800 14Z" fill="#fbd06a" stroke="#d89a28" stroke-width="0.800"/><path d="M4.200 10.300 V12.600 M4.200 13.300 V14.200" stroke="#4a3200" stroke-width="1.100"/></g></svg><svg class="i" style="left:11px;top:165px" width="16" height="16" viewBox="0 0 16 16"><path d="M1 7.800 L4.900 11.600 L8.800 7.800" fill="none" stroke="#404040" stroke-width="1.600"/></svg><svg class="i" style="left:40px;top:183px" width="16" height="16" viewBox="0 0 16 16"><path d="M1 14.500 L4 6.800 H15.700 L12.500 14.500Z" fill="#fae6ae" stroke="#a9762a" stroke-linejoin="round"/><path d="M2.700 13.400 L5 8 H9" fill="none" stroke="#fff" stroke-opacity="0.5" stroke-width="0.900"/><rect x="9" y="3.300" width="6.700" height="5.700" fill="#f6e3bd" stroke="#8a5a2a" stroke-width="0.900"/><path d="M9 6.200 H15.700 M11.200 3.300 V9 M13.500 3.300 V9" stroke="#8a5a2a" stroke-width="0.900"/></svg><svg class="i" style="left:27px;top:183px" width="16" height="16" viewBox="0 0 16 16"><path d="M2.300 5.700 L6.700 10 L2.300 14.300" fill="none" stroke="#a0a0a0" stroke-width="1.800"/></svg><svg class="i" style="left:40px;top:201px" width="16" height="16" viewBox="0 0 16 16"><path d="M1 14.500 L4 6.800 H15.700 L12.500 14.500Z" fill="#9c8a6c" stroke="#5e4a30" stroke-linejoin="round"/><path d="M2.700 13.400 L5 8 H9" fill="none" stroke="#fff" stroke-opacity="0.5" stroke-width="0.900"/><rect x="9" y="3.300" width="6.700" height="5.700" fill="#3f8f30" stroke="#2c6422" stroke-width="0.900"/><path d="M9 6.200 H15.700 M11.200 3.300 V9 M13.500 3.300 V9" stroke="#bfe2a8" stroke-width="0.900"/><g transform="translate(-0.200,1.400)"><path d="M3.700 8.600 Q4.200 8 4.700 8.600 L7.600 14 Q7.900 15 7 15 H1.400 Q0.500 15 0.800 14Z" fill="#fbd06a" stroke="#d89a28" stroke-width="0.800"/><path d="M4.200 10.300 V12.600 M4.200 13.300 V14.200" stroke="#4a3200" stroke-width="1.100"/></g></svg><svg class="i" style="left:27px;top:201px" width="16" height="16" viewBox="0 0 16 16"><path d="M1 7.800 L4.900 11.600 L8.800 7.800" fill="none" stroke="#404040" stroke-width="1.600"/></svg><svg class="i" style="left:56px;top:219px" width="16" height="16" viewBox="0 0 16 16"><rect x="3.500" y="4.500" width="11" height="10.500" fill="#fff" stroke="#5a5a5a" stroke-width="1.100"/><path d="M2.500 9.700 H15.500 M9 3.500 V16" stroke="#5a5a5a" stroke-width="1.100"/><g transform="translate(-0.200,1.400)"><path d="M3.700 8.600 Q4.200 8 4.700 8.600 L7.600 14 Q7.900 15 7 15 H1.400 Q0.500 15 0.800 14Z" fill="#fbd06a" stroke="#d89a28" stroke-width="0.800"/><path d="M4.200 10.300 V12.600 M4.200 13.300 V14.200" stroke="#4a3200" stroke-width="1.100"/></g></svg><svg class="i" style="left:43px;top:219px" width="16" height="16" viewBox="0 0 16 16"><path d="M1 7.800 L4.900 11.600 L8.800 7.800" fill="none" stroke="#404040" stroke-width="1.600"/></svg><svg class="i" style="left:72px;top:237px" width="16" height="16" viewBox="0 0 16 16"><rect x="2.500" y="4.500" width="11.500" height="10.500" fill="#f6dcb8"/><path d="M3.500 5.500 H7.500 V9 H3.500Z M9.300 5.500 H13 V9 H9.300Z M3.500 10.800 H7.500 V14 H3.500Z M9.300 10.800 H13 V14 H9.300Z" fill="#ecc698"/><path d="M2.500 4.500 H14 V15 H2.500Z M1.500 9.800 H15 M8.300 3.500 V16" fill="none" stroke="#9a5a2c" stroke-width="1.200"/></svg><svg class="i" style="left:59px;top:237px" width="16" height="16" viewBox="0 0 16 16"><path d="M2.300 5.700 L6.700 10 L2.300 14.300" fill="none" stroke="#a0a0a0" stroke-width="1.800"/></svg><svg class="i" style="left:72px;top:255px" width="16" height="16" viewBox="0 0 16 16"><rect x="2.500" y="4.500" width="11.500" height="10.500" fill="#f6dcb8"/><path d="M3.500 5.500 H7.500 V9 H3.500Z M9.300 5.500 H13 V9 H9.300Z M3.500 10.800 H7.500 V14 H3.500Z M9.300 10.800 H13 V14 H9.300Z" fill="#ecc698"/><path d="M2.500 4.500 H14 V15 H2.500Z M1.500 9.800 H15 M8.300 3.500 V16" fill="none" stroke="#9a5a2c" stroke-width="1.200"/></svg><svg class="i" style="left:59px;top:255px" width="16" height="16" viewBox="0 0 16 16"><path d="M2.300 5.700 L6.700 10 L2.300 14.300" fill="none" stroke="#a0a0a0" stroke-width="1.800"/></svg><svg class="i" style="left:72px;top:273px" width="16" height="16" viewBox="0 0 16 16"><rect x="2.500" y="4.500" width="11.500" height="10.500" fill="#f6dcb8"/><path d="M3.500 5.500 H7.500 V9 H3.500Z M9.300 5.500 H13 V9 H9.300Z M3.500 10.800 H7.500 V14 H3.500Z M9.300 10.800 H13 V14 H9.300Z" fill="#ecc698"/><path d="M2.500 4.500 H14 V15 H2.500Z M1.500 9.800 H15 M8.300 3.500 V16" fill="none" stroke="#9a5a2c" stroke-width="1.200"/></svg><svg class="i" style="left:59px;top:273px" width="16" height="16" viewBox="0 0 16 16"><path d="M2.300 5.700 L6.700 10 L2.300 14.300" fill="none" stroke="#a0a0a0" stroke-width="1.800"/></svg><svg class="i" style="left:72px;top:291px" width="16" height="16" viewBox="0 0 16 16"><rect x="2.500" y="4.500" width="11.500" height="10.500" fill="#f6dcb8"/><path d="M3.500 5.500 H7.500 V9 H3.500Z M9.300 5.500 H13 V9 H9.300Z M3.500 10.800 H7.500 V14 H3.500Z M9.300 10.800 H13 V14 H9.300Z" fill="#ecc698"/><path d="M2.500 4.500 H14 V15 H2.500Z M1.500 9.800 H15 M8.300 3.500 V16" fill="none" stroke="#9a5a2c" stroke-width="1.200"/></svg><svg class="i" style="left:59px;top:291px" width="16" height="16" viewBox="0 0 16 16"><path d="M1 7.800 L4.900 11.600 L8.800 7.800" fill="none" stroke="#404040" stroke-width="1.600"/></svg><svg class="i" style="left:88px;top:309px" width="16" height="16" viewBox="0 0 16 16"><path d="M2.500 2 H10.200 L13.500 5.300 V15 H2.500Z" fill="#fff" stroke="#b8903c"/><path d="M10.200 2 V5.300 H13.500" fill="#f1dfb0" stroke="#b8903c" stroke-width="0.900"/><path d="M9 5.300 V10.500 Q9 12.400 7.200 12.400 Q5.700 12.400 5.300 11.200" stroke="#2b4c9c" stroke-width="1.800" fill="none"/></svg><svg class="i" style="left:75px;top:309px" width="16" height="16" viewBox="0 0 16 16"><path d="M2.300 5.700 L6.700 10 L2.300 14.300" fill="none" stroke="#a0a0a0" stroke-width="1.800"/></svg><svg class="i" style="left:72px;top:327px" width="16" height="16" viewBox="0 0 16 16"><rect x="2.500" y="4.500" width="11.500" height="10.500" fill="#f6dcb8"/><path d="M3.500 5.500 H7.500 V9 H3.500Z M9.300 5.500 H13 V9 H9.300Z M3.500 10.800 H7.500 V14 H3.500Z M9.300 10.800 H13 V14 H9.300Z" fill="#ecc698"/><path d="M2.500 4.500 H14 V15 H2.500Z M1.500 9.800 H15 M8.300 3.500 V16" fill="none" stroke="#9a5a2c" stroke-width="1.200"/><g transform="translate(-0.200,1.400)"><path d="M3.700 8.600 Q4.200 8 4.700 8.600 L7.600 14 Q7.900 15 7 15 H1.400 Q0.500 15 0.800 14Z" fill="#fbd06a" stroke="#d89a28" stroke-width="0.800"/><path d="M4.200 10.300 V12.600 M4.200 13.300 V14.200" stroke="#4a3200" stroke-width="1.100"/></g></svg><svg class="i" style="left:59px;top:327px" width="16" height="16" viewBox="0 0 16 16"><path d="M1 7.800 L4.900 11.600 L8.800 7.800" fill="none" stroke="#404040" stroke-width="1.600"/></svg><svg class="i" style="left:88px;top:345px" width="16" height="16" viewBox="0 0 16 16"><path d="M2.500 2 H10.200 L13.500 5.300 V15 H2.500Z" fill="#fff" stroke="#b8903c"/><path d="M10.200 2 V5.300 H13.500" fill="#f1dfb0" stroke="#b8903c" stroke-width="0.900"/><path d="M9 5.300 V10.500 Q9 12.400 7.200 12.400 Q5.700 12.400 5.300 11.200" stroke="#2b4c9c" stroke-width="1.800" fill="none"/><g transform="translate(-0.200,1.400)"><path d="M3.700 8.600 Q4.200 8 4.700 8.600 L7.600 14 Q7.900 15 7 15 H1.400 Q0.500 15 0.800 14Z" fill="#fbd06a" stroke="#d89a28" stroke-width="0.800"/><path d="M4.200 10.300 V12.600 M4.200 13.300 V14.200" stroke="#4a3200" stroke-width="1.100"/></g></svg><svg class="i" style="left:75px;top:345px" width="16" height="16" viewBox="0 0 16 16"><path d="M1 7.800 L4.900 11.600 L8.800 7.800" fill="none" stroke="#404040" stroke-width="1.600"/></svg><svg class="i" style="left:104px;top:363px" width="16" height="16" viewBox="0 0 16 16"><circle cx="7.800" cy="7.800" r="6.200" fill="#3a9e4a" stroke="#1f7230" stroke-width="1"/><circle cx="7.800" cy="7.800" r="5.200" fill="none" stroke="#7cc784" stroke-width="0.800" opacity="0.700"/><path d="M10.600 5.800 C9 3.900 5.300 4.700 5.300 7.800 C5.300 10.900 9 11.700 10.600 9.800" stroke="#fff" stroke-width="1.900" fill="none"/></svg><svg class="i" style="left:72px;top:381px" width="16" height="16" viewBox="0 0 16 16"><rect x="2.500" y="4.500" width="11.500" height="10.500" fill="#f6dcb8"/><path d="M3.500 5.500 H7.500 V9 H3.500Z M9.300 5.500 H13 V9 H9.300Z M3.500 10.800 H7.500 V14 H3.500Z M9.300 10.800 H13 V14 H9.300Z" fill="#ecc698"/><path d="M2.500 4.500 H14 V15 H2.500Z M1.500 9.800 H15 M8.300 3.500 V16" fill="none" stroke="#9a5a2c" stroke-width="1.200"/></svg><svg class="i" style="left:59px;top:381px" width="16" height="16" viewBox="0 0 16 16"><path d="M2.300 5.700 L6.700 10 L2.300 14.300" fill="none" stroke="#a0a0a0" stroke-width="1.800"/></svg><svg class="i" style="left:40px;top:399px" width="16" height="16" viewBox="0 0 16 16"><path d="M1 14.500 L4 6.800 H15.700 L12.500 14.500Z" fill="#9c8a6c" stroke="#5e4a30" stroke-linejoin="round"/><path d="M2.700 13.400 L5 8 H9" fill="none" stroke="#fff" stroke-opacity="0.5" stroke-width="0.900"/><rect x="9" y="3.300" width="6.700" height="5.700" fill="#3f8f30" stroke="#2c6422" stroke-width="0.900"/><path d="M9 6.200 H15.700 M11.200 3.300 V9 M13.500 3.300 V9" stroke="#bfe2a8" stroke-width="0.900"/><g transform="translate(-0.200,1.400)"><path d="M3.700 8.600 Q4.200 8 4.700 8.600 L7.600 14 Q7.900 15 7 15 H1.400 Q0.500 15 0.800 14Z" fill="#fbd06a" stroke="#d89a28" stroke-width="0.800"/><path d="M4.200 10.300 V12.600 M4.200 13.300 V14.200" stroke="#4a3200" stroke-width="1.100"/></g></svg><svg class="i" style="left:27px;top:399px" width="16" height="16" viewBox="0 0 16 16"><path d="M2.300 5.700 L6.700 10 L2.300 14.300" fill="none" stroke="#a0a0a0" stroke-width="1.800"/></svg><svg class="i" style="left:40px;top:417px" width="16" height="16" viewBox="0 0 16 16"><rect x="1.600" y="6" width="6" height="2.200" fill="#2f6fc0" stroke="#1e4f98" stroke-width="0.500"/><rect x="2.400" y="8.300" width="8" height="2.700" fill="#3f9a7a" stroke="#2a6c54" stroke-width="0.500"/><rect x="1.200" y="11.200" width="10" height="3.600" fill="#b87a48" stroke="#8a5428" stroke-width="0.500"/><path d="M10 4 L12.300 3.200 L15.600 14.300 L13.400 15Z" fill="#f3b050" stroke="#cf8a28" stroke-width="0.600"/></svg><svg class="i" style="left:27px;top:417px" width="16" height="16" viewBox="0 0 16 16"><path d="M2.300 5.700 L6.700 10 L2.300 14.300" fill="none" stroke="#a0a0a0" stroke-width="1.800"/></svg><svg class="i" style="left:40px;top:435px" width="16" height="16" viewBox="0 0 16 16"><rect x="1.600" y="6" width="6" height="2.200" fill="#2f6fc0" stroke="#1e4f98" stroke-width="0.500"/><rect x="2.400" y="8.300" width="8" height="2.700" fill="#3f9a7a" stroke="#2a6c54" stroke-width="0.500"/><rect x="1.200" y="11.200" width="10" height="3.600" fill="#b87a48" stroke="#8a5428" stroke-width="0.500"/><path d="M10 4 L12.300 3.200 L15.600 14.300 L13.400 15Z" fill="#f3b050" stroke="#cf8a28" stroke-width="0.600"/></svg><svg class="i" style="left:27px;top:435px" width="16" height="16" viewBox="0 0 16 16"><path d="M2.300 5.700 L6.700 10 L2.300 14.300" fill="none" stroke="#a0a0a0" stroke-width="1.800"/></svg><svg class="i" style="left:40px;top:453px" width="16" height="16" viewBox="0 0 16 16"><path d="M1.300 14 V5 H6 L7.300 6.800 H13 V8.700" fill="#fdf4d4" stroke="#c48d2c" stroke-linejoin="round"/><path d="M1.300 14.200 L4.200 8.700 H15.700 L12.700 14.200Z" fill="#fff8e0" stroke="#c48d2c" stroke-linejoin="round"/></svg><svg class="i" style="left:27px;top:453px" width="16" height="16" viewBox="0 0 16 16"><path d="M2.300 5.700 L6.700 10 L2.300 14.300" fill="none" stroke="#a0a0a0" stroke-width="1.800"/></svg><svg class="i" style="left:40px;top:471px" width="16" height="16" viewBox="0 0 16 16"><path d="M1.300 14 V5 H6 L7.300 6.800 H13 V8.700" fill="#fdf4d4" stroke="#c48d2c" stroke-linejoin="round"/><path d="M1.300 14.200 L4.200 8.700 H15.700 L12.700 14.200Z" fill="#fff8e0" stroke="#c48d2c" stroke-linejoin="round"/></svg><svg class="i" style="left:27px;top:471px" width="16" height="16" viewBox="0 0 16 16"><path d="M2.300 5.700 L6.700 10 L2.300 14.300" fill="none" stroke="#a0a0a0" stroke-width="1.800"/></svg><svg class="i" style="left:40px;top:489px" width="16" height="16" viewBox="0 0 16 16"><path d="M1.300 14 V5 H6 L7.300 6.800 H13 V8.700" fill="#fdf4d4" stroke="#c48d2c" stroke-linejoin="round"/><path d="M1.300 14.200 L4.200 8.700 H15.700 L12.700 14.200Z" fill="#fff8e0" stroke="#c48d2c" stroke-linejoin="round"/></svg><svg class="i" style="left:40px;top:507px" width="16" height="16" viewBox="0 0 16 16"><path d="M1.300 14 V5 H6 L7.300 6.800 H13 V8.700" fill="#fdf4d4" stroke="#c48d2c" stroke-linejoin="round"/><path d="M1.300 14.200 L4.200 8.700 H15.700 L12.700 14.200Z" fill="#fff8e0" stroke="#c48d2c" stroke-linejoin="round"/></svg><svg class="i" style="left:27px;top:507px" width="16" height="16" viewBox="0 0 16 16"><path d="M2.300 5.700 L6.700 10 L2.300 14.300" fill="none" stroke="#a0a0a0" stroke-width="1.800"/></svg>
<span class="t" style="left:25.8px;top:32.14px;letter-spacing:-0.132px;">Project Explorer</span><span class="t" style="left:171.8px;top:32.14px;letter-spacing:-0.486px;">JUnit</span><span class="t" style="left:399.8px;top:32.14px;letter-spacing:-0.442px;">SumaTest.java</span><span class="t" style="left:399.8px;top:99.14px;letter-spacing:-0.189px;">Console</span><span class="t" style="left:505.8px;top:99.14px;letter-spacing:-0.113px;">Problems</span><span class="t" style="left:583.8px;top:99.14px;letter-spacing:-0.299px;">Debug Shell</span><span class="t" style="left:675.3px;top:99.14px;letter-spacing:-0.826px;">Search</span><span class="t" style="left:738.8px;top:99.14px;letter-spacing:-0.291px;">Gradle Executions</span><span class="t" style="left:859.8px;top:99.14px;letter-spacing:-0.538px;">Gradle Tasks</span><span class="t" style="left:951.8px;top:99.14px;letter-spacing:-0.233px;">Coverage</span><span class="t" style="left:379.3px;top:120.34px;letter-spacing:-0.14px;">[Gradle Operations]</span><span class="t m" style="left:398.8px;top:54.10px;letter-spacing:0px;color:#787878;">1</span><span class="t" style="left:44.8px;top:76.14px;letter-spacing:-0.121px;">CalculatorPrueba</span><span class="t" style="left:56.5px;top:94.14px;letter-spacing:-0.218px;">CalculatorTest</span><span class="t" style="left:44.8px;top:112.14px;letter-spacing:0.157px;">serenity-cucumber-starter-winium</span><span class="t" style="left:44.8px;top:130.14px;letter-spacing:0.126px;">serenity-cucumber-winappdriver</span><span class="t" style="left:44.8px;top:148.14px;letter-spacing:0.123px;">winappdriver</span><span class="t" style="left:44.8px;top:166.14px;letter-spacing:0.025px;">WindowsAppDriver</span><span class="t" style="left:60.8px;top:184.14px;letter-spacing:0.143px;">src/main/java</span><span class="t" style="left:60.8px;top:202.14px;letter-spacing:0.031px;">src/test/java</span><span class="t" style="left:77.3px;top:220.14px;letter-spacing:-0.009px;">WindowsAppDriver</span><span class="t" style="left:93.3px;top:238.14px;letter-spacing:-0.123px;">driver</span><span class="t" style="left:93.3px;top:256.14px;letter-spacing:0.003px;">exception</span><span class="t" style="left:93.3px;top:274.14px;letter-spacing:-0.237px;">interfaces</span><span class="t" style="left:93.3px;top:292.14px;letter-spacing:-0.215px;">runners</span><span class="t" style="left:108.8px;top:310.14px;letter-spacing:-0.4px;">SumaTest.java</span><span class="t" style="left:93.3px;top:328.14px;letter-spacing:0.049px;">stepdefinitions</span><span class="t" style="left:108.8px;top:346.14px;letter-spacing:-0.096px;">CalculadoraDeWindowsStepDefinitions.java</span><span class="t" style="left:125.3px;top:364.14px;letter-spacing:-0.085px;">CalculadoraDeWindowsStepDefinitions</span><span class="t" style="left:93.3px;top:382.14px;letter-spacing:-0.572px;">steps</span><span class="t" style="left:60.8px;top:400.14px;letter-spacing:-0.047px;">src/test/resources</span><span class="t" style="left:60.8px;top:418.14px;letter-spacing:-0.537px;">JRE System Library</span><span class="t" style="left:60.8px;top:436.14px;letter-spacing:-0.195px;">Project and External Dependencies</span><span class="t" style="left:60.8px;top:454.14px;letter-spacing:0.442px;">bin</span><span class="t" style="left:60.8px;top:472.14px;letter-spacing:0.008px;">gradle</span><span class="t" style="left:60.8px;top:490.14px;letter-spacing:0.009px;">history</span><span class="t" style="left:60.8px;top:508.14px;letter-spacing:-0.8px;">src</span><span class="t" style="left:133.8px;top:94.14px;letter-spacing:-0.065px;color:#9f8868;">[WinAppDriver master]</span><span class="t" style="left:161.8px;top:418.14px;letter-spacing:-0.755px;color:#9f8868;">[JavaSE-1.8]</span><span class="t m" style="left:416.6px;top:53.2px;letter-spacing:-0.2px"><b style="color:#7f0055">package</b> WindowsAppDriver.runners;</span>
</body></html>
